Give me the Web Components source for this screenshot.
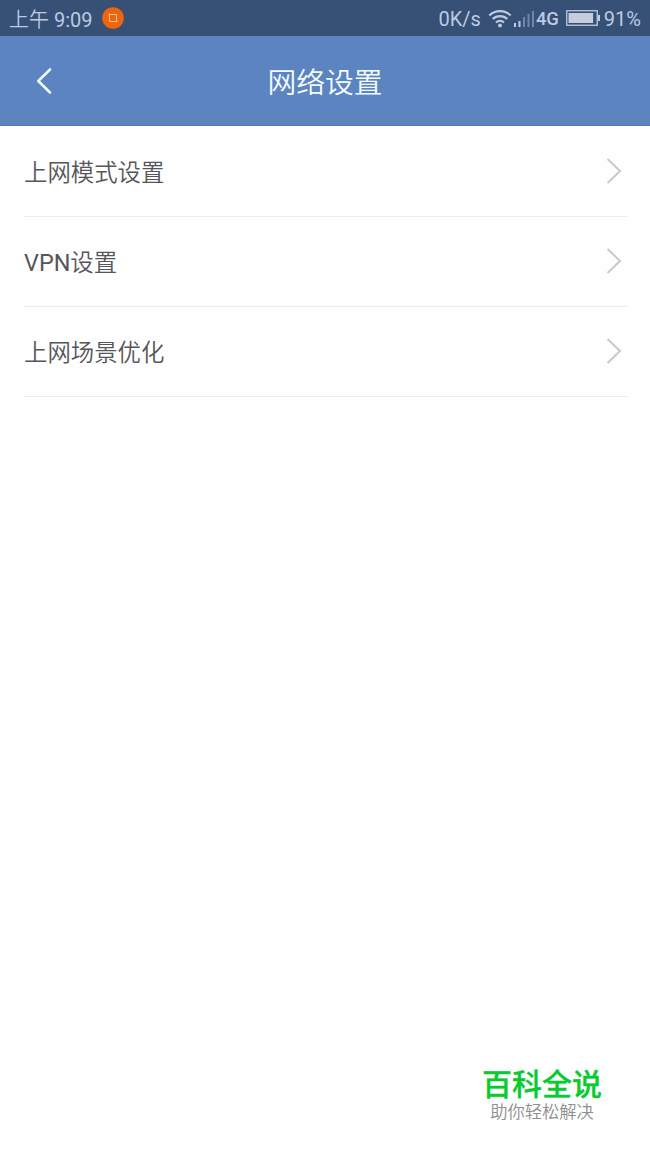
<!DOCTYPE html>
<html lang="zh-CN">
<head>
<meta charset="utf-8">
<title>网络设置</title>
<style>
  html,
  body {
    margin: 0;
    height: 100%;
  }
  body {
    background: #fefefe;
    font-family: Roboto, "Noto Sans CJK SC DemiLight", "Noto Sans CJK SC", sans-serif;
    overflow: hidden;
  }
</style>
</head>
<body>
<settings-screen>
  <status-bar slot="top" time="上午 9:09" speed="0K/s" network="4G" battery="91"></status-bar>
  <nav-bar slot="top">网络设置</nav-bar>
  <setting-row>上网模式设置</setting-row>
  <setting-row>VPN设置</setting-row>
  <setting-row>上网场景优化</setting-row>
  <brand-mark slot="bottom" tagline="助你轻松解决">百科全说</brand-mark>
</settings-screen>

<script>
class BaseElement extends HTMLElement {
  constructor () {
    super()

    const template = document.createElement('template')
    template.innerHTML = this.constructor.markup
    this.attachShadow({ mode: 'open' })
    this.shadowRoot.appendChild(template.content.cloneNode(true))
  }

  setText (selector, value) {
    this.shadowRoot.querySelector(selector).textContent = value
  }
}

class SettingsScreen extends BaseElement {
  static get markup () {
    return `
      <style>
        :host {
          display: flex;
          flex-direction: column;
          height: 100%;
        }
        main {
          flex: 1;
          padding: 1px 23px 0 24px;
        }
      </style>
      <slot name="top"></slot>
      <main><slot></slot></main>
      <slot name="bottom"></slot>
    `
  }
}

class StatusBar extends BaseElement {
  static get markup () {
    return `
      <style>
        :host {
          display: flex;
          align-items: center;
          box-sizing: border-box;
          height: 36px;
          padding: 1px 9px 0;
          background: #375075;
          color: #bccbe3;
          font-size: 20px;
          line-height: 36px;
          white-space: nowrap;
        }
        svg {
          display: block;
          flex: none;
        }
        .time {
          margin-top: 2px;
          font-size: 20px;
        }
        .app {
          margin: -1px 0 0 9px;
        }
        .right {
          display: flex;
          align-items: center;
          margin-left: auto;
        }
        .wifi {
          margin-left: 7px;
        }
        .signal {
          margin-left: 2px;
        }
        .network {
          margin: 0 0 0 2px;
          font-size: 18.4px;
          font-weight: 500;
        }
        .cell {
          margin: -1px 4px 0 7px;
        }
      </style>
      <span class="time"></span>
      <svg class="app" width="22" height="22" viewBox="0 0 22 22">
        <circle cx="11" cy="11" r="10.8" fill="#ee640f"/>
        <path d="M6.500 7.500h8v8M15.500 14.500h-8v-8" fill="none" stroke="#ffc08a" stroke-width="1"/>
      </svg>
      <div class="right">
        <span class="speed"></span>
        <svg class="wifi" width="24" height="20" viewBox="0 0 24 20" fill="none" stroke="#bccbe3" stroke-width="2.100">
          <path d="M1.300 6.500a15.300 15.300 0 0 1 21.400 0M4.700 10.100a10.400 10.400 0 0 1 14.600 0M8 13.500a5.800 5.800 0 0 1 8 0"/>
          <circle cx="12" cy="16.500" r="1.900" fill="#bccbe3" stroke="none"/>
        </svg>
        <svg class="signal" width="20" height="18" viewBox="0 0 20 18">
          <path d="M0 13h2v4H0zM4.500 11h2v6h-2z" fill="#bccbe3"/>
          <path d="M9 7h2v10H9zM13.500 4h2v13h-2zM18 1h2v16h-2z" fill="#7186a8"/>
        </svg>
        <span class="network"></span>
        <svg class="cell" width="34" height="16" viewBox="0 0 34 16">
          <rect x=".75" y=".75" width="30.500" height="14.500" fill="none" stroke="#bccbe3" stroke-width="1.300"/>
          <rect class="level" x="2.500" y="3" height="10" fill="#c6cede"/>
          <path d="M32 5h2v6h-2z" fill="#bccbe3"/>
        </svg>
        <span class="percent"></span>
      </div>
    `
  }

  connectedCallback () {
    const battery = Number(this.getAttribute('battery'))

    this.setText('.time', this.getAttribute('time'))
    this.setText('.speed', this.getAttribute('speed'))
    this.setText('.network', this.getAttribute('network'))
    this.setText('.percent', `${battery}%`)
    this.shadowRoot.querySelector('.level').setAttribute('width', 27 * battery / 100)
  }
}

class NavBar extends BaseElement {
  static get markup () {
    return `
      <style>
        :host {
          display: grid;
          grid-template-columns: 88px 1fr 88px;
          align-items: center;
          box-sizing: border-box;
          height: 90px;
          border-bottom: 1px solid #5578b3;
          background: #5b84c1;
          color: #f2fbff;
        }
        svg {
          display: block;
          margin-left: 36px;
        }
        h1 {
          margin: 5px 0 0;
          font-size: 28.8px;
          font-weight: 350;
          line-height: 40px;
          text-align: center;
        }
      </style>
      <svg width="16" height="26" viewBox="0 0 16 26">
        <path d="M14 1.500L2.300 13L14 24.500" fill="none" stroke="#f2fbff" stroke-width="2.500" stroke-linecap="round" stroke-linejoin="round"/>
      </svg>
      <h1><slot></slot></h1>
    `
  }
}

class SettingRow extends BaseElement {
  static get markup () {
    return `
      <style>
        :host {
          display: flex;
          align-items: center;
          justify-content: space-between;
          box-sizing: border-box;
          height: 90px;
          border-bottom: 1px solid #ebebeb;
          color: #55565a;
          font-size: 23.4px;
          line-height: 34px;
        }
        span {
          margin-top: 2px;
        }
        svg {
          display: block;
          margin: -1px 5px 0 0;
        }
      </style>
      <span><slot></slot></span>
      <svg width="16" height="26" viewBox="0 0 16 26">
        <path d="M1.500 1L14 13L1.500 25" fill="none" stroke="#c9c9c9" stroke-width="2"/>
      </svg>
    `
  }
}

class BrandMark extends BaseElement {
  static get markup () {
    return `
      <style>
        :host {
          display: flex;
          flex-direction: column;
          align-items: center;
          align-self: flex-end;
          margin: 0 48px 32px 0;
        }
        strong {
          margin-bottom: 2px;
          color: #08cb30;
          font-family: "Noto Sans CJK SC", sans-serif;
          font-size: 30px;
          font-weight: 500;
          line-height: 34px;
          -webkit-text-stroke: .3px #08cb30;
        }
        small {
          color: #8f8f8f;
          font-size: 17.3px;
          font-weight: 350;
          line-height: 22px;
        }
      </style>
      <strong><slot></slot></strong>
      <small></small>
    `
  }

  connectedCallback () {
    this.setText('small', this.getAttribute('tagline'))
  }
}

window.customElements.define('status-bar', StatusBar)
window.customElements.define('nav-bar', NavBar)
window.customElements.define('setting-row', SettingRow)
window.customElements.define('brand-mark', BrandMark)
window.customElements.define('settings-screen', SettingsScreen)
</script>
</body>
</html>
